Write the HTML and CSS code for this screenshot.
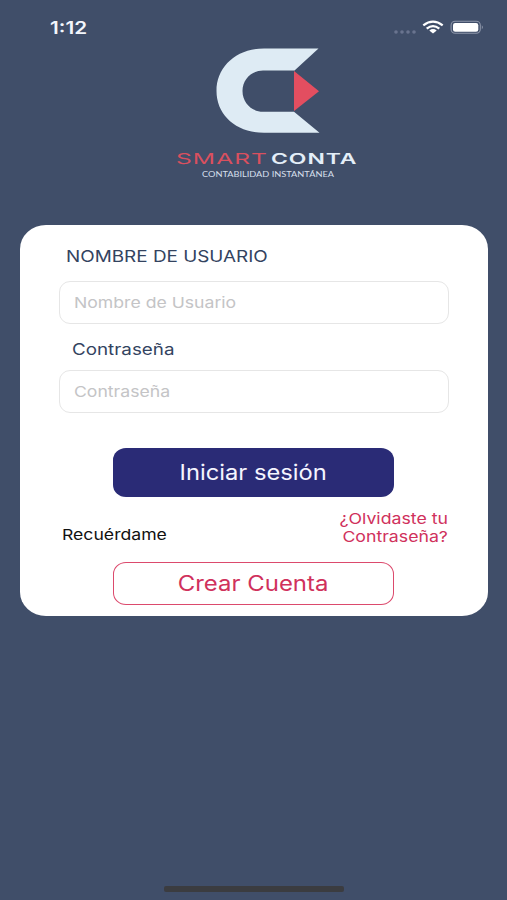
FILE: index.html
```html
<!DOCTYPE html>
<html lang="es">
<head>
<meta charset="utf-8">
<title>SmartConta</title>
<link rel="stylesheet" href="styles.css">
</head>
<body>
<header class="status">
  <span class="wide time">1:12</span>
  <svg class="indicators" width="92" height="16" viewBox="0 0 92 16">
    <g fill="#69748f"><circle cx="4" cy="12" r="1.8"/><circle cx="10" cy="12" r="1.8"/><circle cx="16" cy="12" r="1.8"/><circle cx="22" cy="12" r="1.8"/></g>
    <g fill="none" stroke="#fff" stroke-width="2.3"><path d="M31.3 5.3Q41 -2.1 50.7 5.3"/><path d="M34.7 8.6Q41 3.7 47.3 8.6"/></g>
    <path d="M37.3 10.5Q41 7.7 44.7 10.5L41 13.6Z" fill="#fff"/>
    <rect x="59.1" y="1.3" width="29.2" height="12" rx="4" fill="none" stroke="#8d96aa" stroke-width="1.1"/>
    <rect x="61" y="3" width="25.3" height="8.7" rx="2.2" fill="#fff"/>
    <path d="M89.8 5.3Q92 7.3 89.8 9.3Z" fill="#8d96aa"/>
  </svg>
</header>
<main class="screen">
  <svg class="logo" width="200" height="145" viewBox="0 0 200 145">
    <path d="M153.5 8.5H99C71 8.5 51.5 27 51.5 51S71 92.8 99 92.8H154.5L129 71.8H98C87 71.8 77.5 63 77.5 51S87 30.5 98 30.5H129.5Z" fill="#deebf4"/>
    <path d="M129 31L154 51.3L129 71Z" fill="#e34e60"/>
    <g class="brand">
      <text x="11" y="124" textLength="92" lengthAdjust="spacingAndGlyphs" fill="#d9505f" class="brand-a">SMART</text>
      <text x="106" y="124" textLength="86.5" lengthAdjust="spacingAndGlyphs" fill="#e4eef8" class="brand-b">CONTA</text>
    </g>
    <text x="37" y="136.7" textLength="132" lengthAdjust="spacingAndGlyphs" class="tagline">CONTABILIDAD INSTANTÁNEA</text>
  </svg>
  <form class="card">
    <label class="label label-user"><span class="wide t-user">NOMBRE DE USUARIO</span></label>
    <div class="field"><span class="wide t-ph-user">Nombre de Usuario</span></div>
    <label class="label label-pass"><span class="wide t-pass">Contraseña</span></label>
    <div class="field"><span class="wide t-ph-pass">Contraseña</span></div>
    <button type="button" class="btn primary"><span class="wide t-login">Iniciar sesión</span></button>
    <div class="row">
      <span class="wide remember">Recuérdame</span>
      <a class="forgot">¿Olvidaste tu<br>Contraseña?</a>
    </div>
    <button type="button" class="btn outline"><span class="wide t-create">Crear Cuenta</span></button>
  </form>
</main>
<div class="home"></div>
</body>
</html>
```
FILE: styles.css
```css
* { box-sizing: border-box; }
body {
  margin: 0;
  height: 900px;
  display: flex;
  flex-direction: column;
  overflow: hidden;
  background: #404e69;
  font-family: Inter, "Liberation Sans", sans-serif;
}
.wide { display: inline-block; white-space: nowrap; transform-origin: 0 50%; }
.status {
  height: 40px;
  padding: 15px 23px 0 50px;
  display: flex;
  justify-content: space-between;
}
.time { color: #f3f6fc; font-size: 17px; font-weight: 600; line-height: 26px; transform: scaleX(1.22); }
.indicators { margin-top: 4.6px; }
.screen { flex: 1; display: flex; flex-direction: column; }
.logo { margin-left: 165px; flex: none; }
.brand { font-family: Inter, sans-serif; font-size: 14.5px; letter-spacing: .6px; }
.brand-a { font-weight: 400; }
.brand-b { font-weight: 600; }
.tagline { font-family: Lato, sans-serif; font-size: 8px; fill: #d5dfeb; }
.card {
  margin: 39.6px 19px 0 20px;
  height: 391px;
  padding: 19.4px 39px 0;
  border-radius: 26px / 24px;
  background: #fff;
  display: flex;
  flex-direction: column;
}
.label { display: block; height: 24px; line-height: 24px; color: #33435f; font-size: 16px; }
.label-user { margin: 0 0 13.2px 7px; }
.label-pass { margin: 13px 0 8.5px 13px; }
.field {
  width: 390px;
  height: 43px;
  padding-left: 14px;
  border: 1.5px solid #e6e6e6;
  border-radius: 11px;
  line-height: 41px;
  color: #c4c4c6;
  font-size: 15px;
}
.btn {
  width: 281px;
  margin-left: 54px;
  padding: 0;
  display: flex;
  align-items: center;
  justify-content: center;
  border-radius: 13px / 12px;
  font-family: inherit;
  font-size: 21px;
}
.btn .wide { transform-origin: 50% 50%; }
.primary { height: 49px; margin-top: 35.6px; border: 0; background: #2a2b76; color: #f5f5ff; }
.outline { height: 43px; border: 1.3px solid #dc4a6d; background: #fff; color: #d0315c; }
.row { height: 65.2px; padding-top: 12.4px; display: flex; justify-content: space-between; width: 389px; }
.remember { margin: 15.5px 0 0 3px; height: 20px; line-height: 20px; font-size: 15px; color: #111; transform: scaleX(1.175); }
.forgot { color: #d0315c; font-size: 15px; line-height: 18px; text-align: right; transform: scaleX(1.18); transform-origin: 100% 50%; }
.t-user { transform: scaleX(1.18); }
.t-ph-user, .t-pass, .t-ph-pass { transform: scaleX(1.175); }
.t-login { transform: scaleX(1.13); }
.t-create { transform: scaleX(1.14); }
.home { width: 180px; height: 6px; margin: 0 0 8.5px 164px; border-radius: 2px; background: #3b3c40; }
```
